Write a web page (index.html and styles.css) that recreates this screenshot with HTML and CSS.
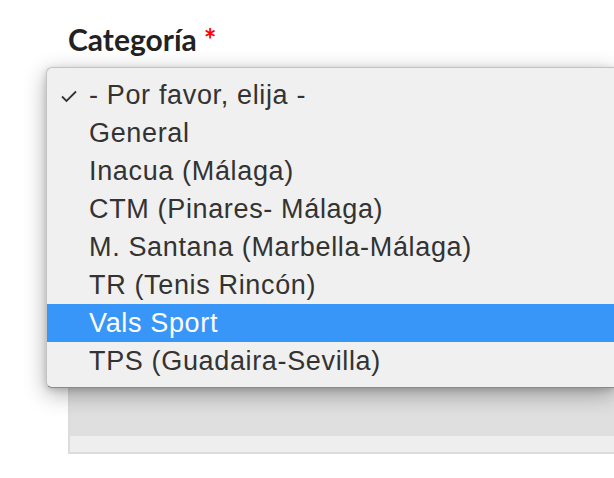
FILE: index.html
```html
<!DOCTYPE html>
<html lang="es">
<head>
  <meta charset="UTF-8" />
  <title>Categoría</title>
  <link rel="stylesheet" href="styles.css">
</head>
<body>

  <!-- ===== CAMPO CATEGORIA ===== -->
  <div class="field">
    <label class="field-label">Categoría<span class="required">*</span></label>
    <div class="select-box">
      <div class="select-footer"></div>
    </div>

    <!-- ===== MENU DESPLEGABLE ===== -->
    <ul class="dropdown">
      <li class="option selected">
        <svg class="check" width="18" height="14" viewBox="0 0 18 14">
          <path d="M2 7.5 L6.5 12 L16 2.5" fill="none" stroke="#333" stroke-width="1.8"/>
        </svg>
        - Por favor, elija -
      </li>
      <li class="option">General</li>
      <li class="option">Inacua (Málaga)</li>
      <li class="option">CTM (Pinares- Málaga)</li>
      <li class="option">M. Santana (Marbella-Málaga)</li>
      <li class="option">TR (Tenis Rincón)</li>
      <li class="option active">Vals Sport</li>
      <li class="option">TPS (Guadaira-Sevilla)</li>
    </ul>
  </div>

</body>
</html>
```

FILE: styles.css
```css
* {
  box-sizing: border-box;
  margin: 0;
  padding: 0;
}

body {
  background: #fff;
  font-family: "Liberation Sans", Arial, sans-serif;
  overflow: hidden;
}

.field {
  position: relative;
  padding: 20px 0 0 68px;
}

.field-label {
  display: block;
  font-family: Lato, sans-serif;
  font-weight: bold;
  font-size: 30px;
  color: #222;
  line-height: 38px;
  height: 38px;
}

.required {
  color: #f00;
  margin-left: 7px;
}

.select-box {
  margin-top: 12px;
  height: 384px;
  background: #dfdfdf;
  border: 2px solid #dcdcdc;
  border-right: none;
  display: flex;
  flex-direction: column;
  justify-content: flex-end;
}

.select-footer {
  height: 16px;
  background: #eee;
}

.dropdown {
  position: absolute;
  top: 67px;
  left: 46px;
  right: 0;
  list-style: none;
  background: #f0f0f0;
  border: 1px solid #c4c4c4;
  border-right: none;
  border-bottom-color: #8a8a8a;
  border-radius: 6px 0 0 6px;
  padding: 8px 0 7px;
  box-shadow: 0 6px 22px rgba(0, 0, 0, 0.32), 0 2px 6px rgba(0, 0, 0, 0.15);
}

.option {
  position: relative;
  height: 38px;
  line-height: 38px;
  padding-left: 42px;
  font-size: 27px;
  letter-spacing: 0.65px;
  color: #333;
}

.option.active {
  background: #3896f9;
  color: #fff;
}

.check {
  position: absolute;
  left: 13px;
  top: 13px;
}
```
